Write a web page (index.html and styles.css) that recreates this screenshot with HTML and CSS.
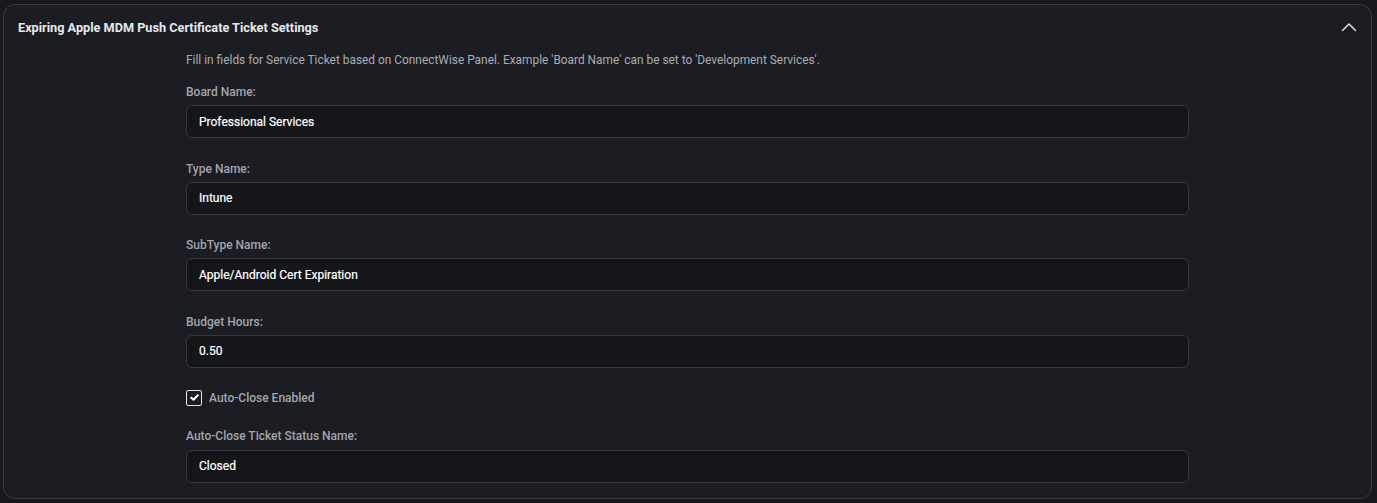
FILE: index.html
```html
<!DOCTYPE html>
<html lang="en">
<head>
<meta charset="utf-8">
<title>Expiring Apple MDM Push Certificate Ticket Settings</title>
<link rel="stylesheet" href="styles.css">
</head>
<body>
<section class="card">
  <header class="card-header">
    <h2 class="card-title">Expiring Apple MDM Push Certificate Ticket Settings</h2>
    <svg class="chevron" width="16" height="10" viewBox="0 0 16 10" aria-hidden="true">
      <path d="M1.5 8.5 L8 2 L14.5 8.5" fill="none" stroke="#d6d9e0" stroke-width="1.6" stroke-linecap="round" stroke-linejoin="round"/>
    </svg>
  </header>
  <div class="card-body">
    <div class="form">
      <p class="hint">Fill in fields for Service Ticket based on ConnectWise Panel. Example 'Board Name' can be set to 'Development Services'.</p>
      <div class="field">
        <label class="label">Board Name:</label>
        <div class="input">Professional Services</div>
      </div>
      <div class="field">
        <label class="label">Type Name:</label>
        <div class="input">Intune</div>
      </div>
      <div class="field">
        <label class="label">SubType Name:</label>
        <div class="input">Apple/Android Cert Expiration</div>
      </div>
      <div class="field">
        <label class="label">Budget Hours:</label>
        <div class="input">0.50</div>
      </div>
      <div class="check-row">
        <span class="checkbox">
          <svg width="9" height="7" viewBox="0 0 9 7" aria-hidden="true">
            <path d="M1.3 3.7 L3.5 5.7 L7.8 1.3" fill="none" stroke="#ffffff" stroke-width="2" stroke-linecap="round" stroke-linejoin="round"/>
          </svg>
        </span>
        <span class="check-label">Auto-Close Enabled</span>
      </div>
      <div class="field last">
        <label class="label">Auto-Close Ticket Status Name:</label>
        <div class="input">Closed</div>
      </div>
    </div>
  </div>
</section>
</body>
</html>
```

FILE: styles.css
```css
* { box-sizing: border-box; }

html, body {
  margin: 0;
  padding: 0;
  background: #18191d;
}

body {
  font-family: Roboto, "Liberation Sans", Arial, sans-serif;
  padding: 4px 5px 4px 3px;
}

.card {
  background: #1c1d22;
  border: 1px solid #3a3b41;
  border-radius: 12px;
  height: 495px;
}

.card-header {
  height: 45px;
  display: flex;
  align-items: center;
  justify-content: space-between;
  padding: 0 14px 0 14px;
}

.card-title {
  margin: 0;
  font-size: 12.7px;
  line-height: 16px;
  font-weight: 700;
  color: #e6e8ee;
  padding-top: 1px;
}

.chevron {
  display: block;
  margin-top: -1px;
}

.card-body {
  padding: 2px 0 15px;
}

.form {
  max-width: 1003px;
  margin: 0 auto;
  display: flex;
  flex-direction: column;
}

.hint {
  margin: 0 0 16px;
  font-size: 11.9px;
  line-height: 16px;
  color: #a9acb4;
}

.field {
  display: flex;
  flex-direction: column;
  margin-bottom: 22.67px;
}

.field.last { margin-bottom: 0; }

.label {
  font-size: 12px;
  line-height: 16px;
  font-weight: 500;
  color: #a2a5ad;
  margin-bottom: 5px;
}

.field.last .label { margin-bottom: 6px; }

.input {
  height: 33px;
  border: 1px solid #37383e;
  border-radius: 6px;
  background: #15161a;
  padding: 0 12px;
  display: flex;
  align-items: center;
  font-size: 12px;
  font-weight: 400;
  color: #ffffff;
  -webkit-text-stroke: 0.2px #ffffff;
}

.check-row {
  display: flex;
  align-items: center;
  gap: 7px;
  height: 16px;
  margin-top: -1px;
  margin-bottom: 22px;
}

.checkbox {
  width: 16px;
  height: 16px;
  border: 1.5px solid #e4e6ec;
  border-radius: 2px;
  display: flex;
  align-items: center;
  justify-content: center;
}

.checkbox svg { display: block; }

.check-label {
  font-size: 12px;
  line-height: 16px;
  font-weight: 500;
  color: #a3a6ae;
}
```
